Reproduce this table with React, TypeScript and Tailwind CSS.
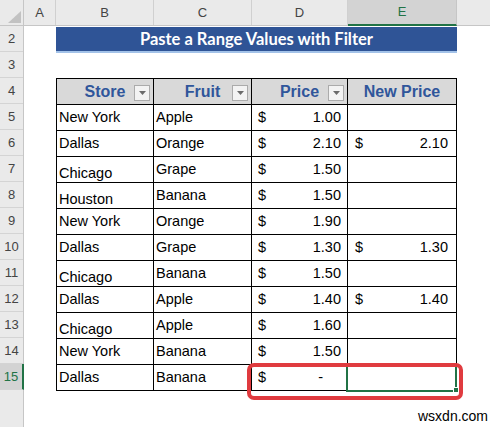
import React from 'react';

type Row = { store: string; fruit: string; price: string; newPrice: string; low?: boolean };

const rows: Row[] = [
  { store: 'New York', fruit: 'Apple', price: '1.00', newPrice: '' },
  { store: 'Dallas', fruit: 'Orange', price: '2.10', newPrice: '2.10' },
  { store: 'Chicago', fruit: 'Grape', price: '1.50', newPrice: '', low: true },
  { store: 'Houston', fruit: 'Banana', price: '1.50', newPrice: '', low: true },
  { store: 'New York', fruit: 'Orange', price: '1.90', newPrice: '' },
  { store: 'Dallas', fruit: 'Grape', price: '1.30', newPrice: '1.30' },
  { store: 'Chicago', fruit: 'Banana', price: '1.50', newPrice: '', low: true },
  { store: 'Dallas', fruit: 'Apple', price: '1.40', newPrice: '1.40' },
  { store: 'Chicago', fruit: 'Apple', price: '1.60', newPrice: '', low: true },
  { store: 'New York', fruit: 'Banana', price: '1.50', newPrice: '' },
  { store: 'Dallas', fruit: 'Banana', price: '-', newPrice: '' },
];

const rowNumbers = [2, 3, 4, 5, 6, 7, 8, 9, 10, 11, 12, 13, 14, 15];

function FilterButton() {
  return (
    <div className="absolute right-[3px] bottom-[3px] w-[16px] h-[16px] border border-[#ababab] bg-[#f3f3f3] flex items-center justify-center">
      <svg width="7" height="4" viewBox="0 0 7 4">
        <polygon points="0,0 7,0 3.5,4" fill="#6b6b6b" />
      </svg>
    </div>
  );
}

function HeaderCell({ label, w, filter }: { label: string; w: string; filter?: boolean }) {
  return (
    <div className={`relative ${w} h-[26px] bg-[#d9d9d9] border-r border-b border-black flex items-center justify-center`}>
      <span className="text-[16px] font-bold text-[#30569b]">{label}</span>
      {filter && <FilterButton />}
    </div>
  );
}

export default function App() {
  return (
    <div className="relative w-[490px] h-[427px] overflow-hidden bg-white font-['Liberation_Sans',Arial,sans-serif] text-black">
      {/* Column headers */}
      <div className="flex h-[26px] bg-[#eaeaea] border-b border-[#c6c6c6] text-[13px] text-[#444]">
        <div className="w-[24px] h-full border-r border-[#c6c6c6]">
          <svg width="23" height="25" viewBox="0 0 23 25">
            <polygon points="21,11 21,23 8,23" fill="#c2c2c2" />
          </svg>
        </div>
        <div className="w-[32px] border-r border-[#d0d0d0] flex items-center justify-center">A</div>
        <div className="w-[98px] border-r border-[#d0d0d0] flex items-center justify-center">B</div>
        <div className="w-[98px] border-r border-[#d0d0d0] flex items-center justify-center">C</div>
        <div className="w-[96px] border-r border-[#d0d0d0] flex items-center justify-center">D</div>
        <div className="w-[109px] h-[26px] -mb-px bg-[#d3d3d3] border-b-2 border-[#217346] border-r border-r-[#c6c6c6] flex items-center justify-center text-[#217346]">
          E
        </div>
        <div className="flex-1" />
      </div>

      <div className="flex h-[401px]">
        {/* Row headers */}
        <div className="w-[24px] h-full bg-[#eaeaea] border-r border-[#c6c6c6] flex flex-col text-[13px] text-[#444]">
          {rowNumbers.map((n) => (
            <div
              key={n}
              className={`h-[26px] flex items-center justify-center border-b border-[#d4d4d4] ${
                n === 15 ? 'bg-[#d3d3d3] text-[#217346] border-r-2 border-r-[#217346] -mr-px' : ''
              }`}
            >
              {n}
            </div>
          ))}
        </div>

        {/* Sheet */}
        <div className="flex-1 pl-[32px]">
          <div className="mt-[1px] w-[401px] h-[26px] bg-[#2f5496] border-b-2 border-[#a3c2e8] flex items-center justify-center">
            <span className="font-['Lato',sans-serif] font-bold text-[16.5px] text-white">
              Paste a Range Values with Filter
            </span>
          </div>

          <div className="mt-[25px] w-[401px] border-l border-t border-black">
            <div className="flex">
              <HeaderCell label="Store" w="w-[97px]" filter />
              <HeaderCell label="Fruit" w="w-[98px]" filter />
              <HeaderCell label="Price" w="w-[96px]" filter />
              <HeaderCell label="New Price" w="w-[109px]" />
            </div>
            {rows.map((r, i) => (
              <div key={i} className="flex h-[26px] text-[14.5px]">
                <div className={`w-[97px] border-r border-b border-black flex items-center pl-[2px] ${r.low ? 'pt-[9px]' : ''}`}>
                  {r.store}
                </div>
                <div className="w-[98px] border-r border-b border-black flex items-center pl-[2px]">{r.fruit}</div>
                <div className="w-[96px] border-r border-b border-black flex items-center justify-between pl-[6px] pr-[6px]">
                  <span>$</span>
                  <span className={r.price === '-' ? 'mr-[18px]' : ''}>{r.price}</span>
                </div>
                <div className="w-[109px] border-r border-b border-black flex items-center justify-between pl-[7px] pr-[8px]">
                  {r.newPrice && (
                    <>
                      <span>$</span>
                      <span>{r.newPrice}</span>
                    </>
                  )}
                </div>
              </div>
            ))}
          </div>
        </div>
      </div>

      {/* Active cell E15 */}
      <div className="absolute left-[346px] top-[365px] w-[111px] h-[27px] border-2 border-t-0 border-[#217346]" />
      <div className="absolute left-[453px] top-[387px] w-[6px] h-[6px] bg-[#217346] border border-white" />

      {/* Red highlight */}
      <div className="absolute left-[247px] top-[363px] w-[216px] h-[37px] border-[4px] border-[#e03b3f] rounded-[7px]" />

      {/* Watermark */}
      <div className="absolute left-[418px] top-[406px] text-[14px] text-black">wsxdn.com</div>
    </div>
  );
}
